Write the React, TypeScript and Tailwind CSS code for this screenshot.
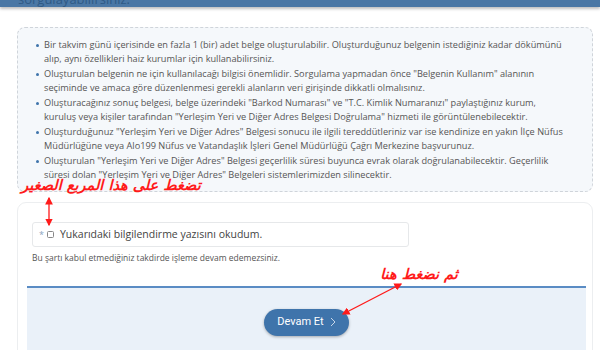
import React from "react";

const items: string[][] = [
  [
    "Bir takvim günü içerisinde en fazla 1 (bir) adet belge oluşturulabilir. Oluşturduğunuz belgenin istediğiniz kadar dökümünü",
    "alıp, aynı özellikleri haiz kurumlar için kullanabilirsiniz.",
  ],
  [
    'Oluşturulan belgenin ne için kullanılacağı bilgisi önemlidir. Sorgulama yapmadan önce "Belgenin Kullanım" alanının',
    "seçiminde ve amaca göre düzenlenmesi gerekli alanların veri girişinde dikkatli olmalısınız.",
  ],
  [
    'Oluşturacağınız sonuç belgesi, belge üzerindeki "Barkod Numarası" ve "T.C. Kimlik Numaranızı" paylaştığınız kurum,',
    'kuruluş veya kişiler tarafından "Yerleşim Yeri ve Diğer Adres Belgesi Doğrulama" hizmeti ile görüntülenebilecektir.',
  ],
  [
    'Oluşturduğunuz "Yerleşim Yeri ve Diğer Adres" Belgesi sonucu ile ilgili tereddütleriniz var ise kendinize en yakın İlçe Nüfus',
    "Müdürlüğüne veya Alo199 Nüfus ve Vatandaşlık İşleri Genel Müdürlüğü Çağrı Merkezine başvurunuz.",
  ],
  [
    'Oluşturulan "Yerleşim Yeri ve Diğer Adres" Belgesi geçerlilik süresi buyunca evrak olarak doğrulanabilecektir. Geçerlilik',
    'süresi dolan "Yerleşim Yeri ve Diğer Adres" Belgeleri sistemlerimizden silinecektir.',
  ],
];

export default function App() {
  return (
    <div className="relative w-[600px] h-[350px] overflow-hidden bg-white font-['Open_Sans',sans-serif]">
      {/* top bar */}
      <div className="h-[7px] bg-[#4a77a5] shadow-[0_2px_3px_rgba(0,0,0,0.25)] overflow-hidden">
        <div className="pl-[18px] -mt-[7px] text-[13px] text-[#2f5a85] leading-[13px]">sorgulayabilirsiniz.</div>
      </div>

      {/* info box */}
      <div className="ml-[17px] mt-[20px] w-[576px] h-[165px] rounded-[8px] border border-dashed border-[#cfd4da] bg-[#f5f8fb] pt-[10px] pl-[18px]">
        <ul className="flex flex-col gap-[1px]">
          {items.map((lines, i) => (
            <li key={i} className="flex text-[9.2px] leading-[14px] text-[#555] whitespace-nowrap">
              <span className="mt-[6px] mr-[5px] w-[3px] h-[3px] rounded-full bg-[#3f74ab] shrink-0" />
              <span>
                {lines[0]}
                <br />
                {lines[1]}
              </span>
            </li>
          ))}
        </ul>
      </div>

      {/* form card */}
      <div className="ml-[17px] mt-[10px] w-[576px] h-[200px] rounded-[9px] border border-[#eceef0] bg-white pt-[19px]">
        <div className="ml-[14px] w-[377px] h-[25px] rounded-[3px] border border-[#e6e8ea] flex items-center pl-[6px] text-[10.5px] text-[#444]">
          <span className="text-[#8aa4c0] text-[9px] mr-[3px]">*</span>
          <span className="w-[7px] h-[7px] border border-[#888] rounded-[1.5px] mr-[6px]" />
          <span>Yukarıdaki bilgilendirme yazısını okudum.</span>
        </div>
        <div className="ml-[14px] mt-[5px] text-[8.5px] text-[#555]">
          Bu şartı kabul etmediğiniz takdirde işleme devam edemezsiniz.
        </div>
        <div className="ml-[9px] mr-[6px] mt-[21px] h-[120px] border-t-2 border-[#5a8cc4] bg-[#eaf1f9] pt-[21px] flex justify-center items-start">
          <button className="w-[85px] h-[27px] rounded-full bg-[#3f74ab] shadow-[0_1px_3px_rgba(0,0,0,0.3)] text-white text-[11px] font-['Roboto',sans-serif] flex items-center justify-center gap-[6px]">
            <span>Devam Et</span>
            <svg width="6" height="10" viewBox="0 0 6 10" fill="none">
              <path d="M1 1l4 4-4 4" stroke="#c7d6e8" strokeWidth="1" />
            </svg>
          </button>
        </div>
      </div>

      {/* annotations */}
      <div className="absolute left-[33px] top-[175px] w-[156px] flex justify-center">
        <span className="text-[14.5px] font-bold italic text-[#ff1a1a] font-['DejaVu_Sans',sans-serif] leading-[20px] whitespace-nowrap">
          تضغط على هذا المربع الصغير
        </span>
      </div>
      <div className="absolute left-[386px] top-[264px] w-[66px] flex justify-center">
        <span className="text-[14.5px] font-bold italic text-[#ff1a1a] font-['DejaVu_Sans',sans-serif] leading-[20px] whitespace-nowrap">
          ثم نضغط هنا
        </span>
      </div>
      <svg className="absolute left-0 top-0 pointer-events-none" width="600" height="350">
        <defs>
          <marker id="ah" markerWidth="6" markerHeight="6" refX="5" refY="3" orient="auto-start-reverse">
            <path d="M0 0L6 3L0 6z" fill="#ff1a1a" />
          </marker>
        </defs>
        <line x1="49" y1="198" x2="49" y2="225" stroke="#ff1a1a" strokeWidth="1.3" markerStart="url(#ah)" markerEnd="url(#ah)" />
        <line x1="401" y1="284" x2="343" y2="314" stroke="#ff1a1a" strokeWidth="1.3" markerStart="url(#ah)" markerEnd="url(#ah)" />
      </svg>
    </div>
  );
}
